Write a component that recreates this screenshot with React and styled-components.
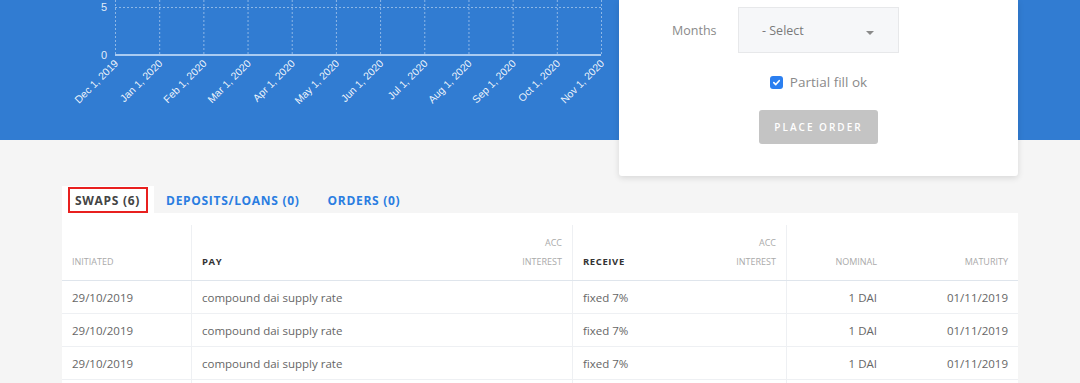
import React from "react";
import styled, { createGlobalStyle } from "styled-components";

const GlobalStyle = createGlobalStyle`
  body {
    margin: 0;
    background: #f5f5f5;
    font-family: "Open Sans", "Noto Sans", sans-serif;
  }
`;

const months = [
  "Dec 1, 2019",
  "Jan 1, 2020",
  "Feb 1, 2020",
  "Mar 1, 2020",
  "Apr 1, 2020",
  "May 1, 2020",
  "Jun 1, 2020",
  "Jul 1, 2020",
  "Aug 1, 2020",
  "Sep 1, 2020",
  "Oct 1, 2020",
  "Nov 1, 2020",
];

const swaps = [
  { initiated: "29/10/2019", pay: "compound dai supply rate", receive: "fixed 7%", nominal: "1 DAI", maturity: "01/11/2019" },
  { initiated: "29/10/2019", pay: "compound dai supply rate", receive: "fixed 7%", nominal: "1 DAI", maturity: "01/11/2019" },
  { initiated: "29/10/2019", pay: "compound dai supply rate", receive: "fixed 7%", nominal: "1 DAI", maturity: "01/11/2019" },
];

const Page = styled.div`
  width: 1080px;
  height: 383px;
  overflow: hidden;
`;

const Hero = styled.section`
  display: flex;
  align-items: flex-start;
  height: 177px;
  background: linear-gradient(#317cd2 0 140px, #f5f5f5 140px);
`;

const ChartWrap = styled.div`
  width: 610px;
  height: 140px;
  flex: none;
`;

const OrderCard = styled.div`
  margin-left: 9px;
  width: 399px;
  height: 176px;
  background: #fff;
  border-radius: 0 0 3px 3px;
  box-shadow: 0 2px 6px rgba(0, 0, 0, 0.12);
  display: flex;
  flex-direction: column;
  align-items: center;
  padding-top: 7px;
  box-sizing: border-box;
`;

const FieldRow = styled.div`
  align-self: stretch;
  display: flex;
  align-items: center;
  padding-left: 53px;
`;

const FieldLabel = styled.label`
  width: 66px;
  font-size: 12.5px;
  color: #8a8a8a;
`;

const Select = styled.div`
  width: 161px;
  height: 46px;
  box-sizing: border-box;
  background: #f6f7f9;
  border: 1px solid #e7e8ea;
  display: flex;
  align-items: center;
  justify-content: space-between;
  padding: 0 24px 0 23px;
  font-size: 12.5px;
  color: #7a7a7a;
`;

const Caret = styled.span`
  width: 0;
  height: 0;
  margin-top: 6px;
  border-left: 4px solid transparent;
  border-right: 4px solid transparent;
  border-top: 4px solid #8a8a8a;
`;

const CheckRow = styled.label`
  display: flex;
  align-items: center;
  gap: 7px;
  margin-top: 20px;
  font-size: 13.5px;
  color: #8a8a8a;
`;

const CheckBox = styled.span`
  width: 13px;
  height: 13px;
  border-radius: 3px;
  background: #2b7ff0;
  display: flex;
  align-items: center;
  justify-content: center;
`;

const OrderButton = styled.button`
  margin-top: 19px;
  width: 119px;
  height: 34px;
  border: none;
  border-radius: 3px;
  background: #c4c4c4;
  color: #fff;
  font-family: "Open Sans", sans-serif;
  font-size: 10px;
  font-weight: 600;
  letter-spacing: 2px;
  padding: 0;
`;

const Tabs = styled.nav`
  display: flex;
  margin: 9px 0 0 62px;
  height: 27px;
`;

const Tab = styled.div`
  display: flex;
  align-items: center;
  padding: 1px ${({ $active }) => ($active ? "6px" : "12px")} 0;
  background: ${({ $active }) => ($active ? "#fff" : "transparent")};
  color: ${({ $active }) => ($active ? "#444" : "#2a7de1")};
  font-size: 12px;
  font-weight: 700;
  letter-spacing: 0.7px;
  &:last-child {
    padding-left: 16px;
  }
`;

const Outline = styled.span`
  border: 2px solid #e8201f;
  padding: 4px 6px 3px 5px;
  line-height: 15px;
`;

const Table = styled.div`
  margin-left: 62px;
  width: 956px;
  background: #fff;
  padding-top: 12px;
`;

const Row = styled.div`
  display: grid;
  grid-template-columns: 129px 381px 214px 101px 131px;
  border-bottom: 1px solid ${({ $head }) => ($head ? "#dfe5ec" : "#eef0f3")};
  height: ${({ $head }) => ($head ? "55px" : "32px")};
`;

const Cell = styled.div`
  display: flex;
  align-items: ${({ $head }) => ($head ? "flex-end" : "center")};
  justify-content: ${({ $right }) => ($right ? "flex-end" : "space-between")};
  padding: ${({ $head }) => ($head ? "0 10px 9px 10px" : "0 10px")};
  border-left: ${({ $divider }) => ($divider ? "1px solid #eef0f3" : "none")};
  font-size: 11.5px;
  color: #666;
`;

const HeadLabel = styled.span`
  line-height: 19px;
  text-transform: uppercase;
  color: ${({ $strong }) => ($strong ? "#333" : "#aaa")};
  font-weight: ${({ $strong }) => ($strong ? 700 : 400)};
  font-size: ${({ $strong }) => ($strong ? "9.5px" : "9px")};
  letter-spacing: ${({ $strong }) => ($strong ? "0.6px" : "0")};
  text-align: right;
`;

function Chart() {
  const left = 115;
  const right = 601;
  const step = (right - left) / (months.length - 1);
  return (
    <svg width="610" height="140" style={{ display: "block" }}>
      <g stroke="rgba(255,255,255,0.45)" strokeWidth="1" strokeDasharray="2 2">
        <line x1={left} y1="7.5" x2={right} y2="7.5" />
        {months.map((m, i) => (
          <line key={m} x1={left + i * step + 0.5} y1="0" x2={left + i * step + 0.5} y2="54" />
        ))}
      </g>
      <line x1={left} y1="55" x2={right} y2="55" stroke="#a9cbf2" strokeWidth="2" />
      <g fill="rgba(255,255,255,0.88)" fontFamily="Liberation Sans, Arial, sans-serif" fontSize="11">
        <text x="107" y="11" textAnchor="end">5</text>
        <text x="107" y="59" textAnchor="end">0</text>
      </g>
      <g fill="rgba(255,255,255,0.92)" fontFamily="Liberation Sans, Arial, sans-serif" fontSize="10.5">
        {months.map((m, i) => {
          const x = left + i * step + 4;
          const y = 64;
          return (
            <text key={m} x={x} y={y} textAnchor="end" transform={`rotate(-45 ${x} ${y})`}>
              {m}
            </text>
          );
        })}
      </g>
    </svg>
  );
}

export default function App() {
  return (
    <Page>
      <GlobalStyle />
      <Hero>
        <ChartWrap>
          <Chart />
        </ChartWrap>
        <OrderCard>
          <FieldRow>
            <FieldLabel>Months</FieldLabel>
            <Select>
              <span>- Select</span>
              <Caret />
            </Select>
          </FieldRow>
          <CheckRow>
            <CheckBox>
              <svg width="9" height="9" viewBox="0 0 10 10">
                <path d="M2 5.2 L4.2 7.3 L8 3" fill="none" stroke="#fff" strokeWidth="1.8" strokeLinecap="round" strokeLinejoin="round" />
              </svg>
            </CheckBox>
            Partial fill ok
          </CheckRow>
          <OrderButton>PLACE ORDER</OrderButton>
        </OrderCard>
      </Hero>
      <Tabs>
        <Tab $active>
          <Outline>SWAPS (6)</Outline>
        </Tab>
        <Tab>DEPOSITS/LOANS (0)</Tab>
        <Tab>ORDERS (0)</Tab>
      </Tabs>
      <Table>
        <Row $head>
          <Cell $head>
            <HeadLabel>Initiated</HeadLabel>
          </Cell>
          <Cell $head $divider>
            <HeadLabel $strong>Pay</HeadLabel>
            <HeadLabel>
              Acc
              <br />
              Interest
            </HeadLabel>
          </Cell>
          <Cell $head $divider>
            <HeadLabel $strong>Receive</HeadLabel>
            <HeadLabel>
              Acc
              <br />
              Interest
            </HeadLabel>
          </Cell>
          <Cell $head $divider $right>
            <HeadLabel>Nominal</HeadLabel>
          </Cell>
          <Cell $head $right>
            <HeadLabel>Maturity</HeadLabel>
          </Cell>
        </Row>
        {swaps.map((s, i) => (
          <Row key={i}>
            <Cell>{s.initiated}</Cell>
            <Cell $divider>{s.pay}</Cell>
            <Cell $divider>{s.receive}</Cell>
            <Cell $divider $right>{s.nominal}</Cell>
            <Cell $right>{s.maturity}</Cell>
          </Row>
        ))}
        <Row>
          <Cell />
          <Cell $divider />
          <Cell $divider />
          <Cell $divider />
          <Cell />
        </Row>
      </Table>
    </Page>
  );
}
